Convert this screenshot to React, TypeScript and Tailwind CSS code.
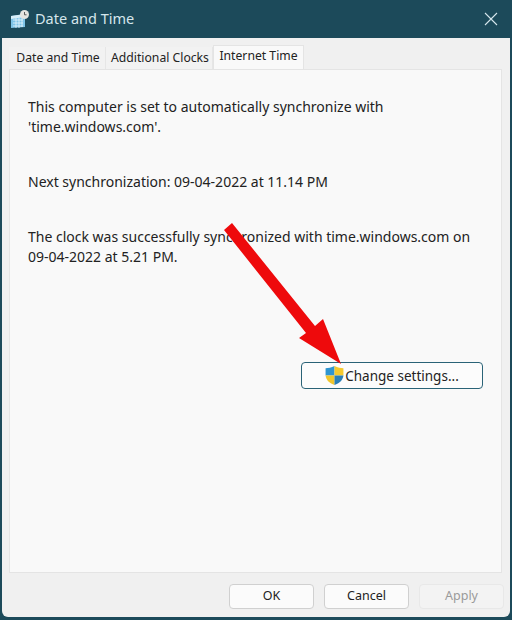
function WindowIcon() {
  return (
    <svg width="20" height="20" viewBox="0 0 20 20" className="shrink-0">
      <path d="M1 7 L15 5 L15 18 L1 19 Z" fill="#7fc4e8" />
      <path d="M1 7 L15 5 L15 8 L1 10 Z" fill="#d8eef8" />
      <path d="M3 11h10M3 14h10M3 17h10M6 9v10M9 9v10M12 9v9" stroke="#e8f6fc" strokeWidth="0.8" />
      <circle cx="14.5" cy="5.5" r="4.5" fill="#e4e4e0" />
      <path d="M14.5 3v2.8h2" stroke="#5a5a5a" strokeWidth="1" fill="none" />
    </svg>
  );
}

function ShieldIcon() {
  return (
    <svg width="21" height="21" viewBox="0 0 19 20" className="-ml-[1px] shrink-0">
      <path d="M9.5 1 C6.5 2.5 3.5 3 1 3 L1 10 L9.5 10 Z" fill="#2f95d0" />
      <path d="M9.5 1 C12.5 2.5 15.5 3 18 3 L18 10 L9.5 10 Z" fill="#f5c92e" />
      <path d="M1 10 C1.5 14.5 5 17.5 9.5 19 L9.5 10 Z" fill="#f0c62c" />
      <path d="M18 10 C17.5 14.5 14 17.5 9.5 19 L9.5 10 Z" fill="#2a7fb8" />
    </svg>
  );
}

function FooterButton({ label, disabled }: { label: string; disabled?: boolean }) {
  return (
    <button
      type="button"
      className={
        disabled
          ? 'h-[25px] w-[85px] rounded-[4px] border border-[#e8e8e8] bg-[#f3f3f3] text-[#9a9a9a]'
          : 'h-[25px] w-[85px] rounded-[4px] border border-[#d0d0d0] bg-[#fbfbfb] text-[#222222]'
      }
    >
      {label}
    </button>
  );
}

export default function App() {
  return (
    <div className="relative h-[620px] w-[512px] overflow-hidden bg-[#1c4a5a] font-['Noto_Sans',sans-serif] text-[12.5px]">
      <div className="flex h-[38px] items-center pl-[10px] pr-[14px] text-[#d5e6ec]">
        <WindowIcon />
        <span className="ml-[5px] text-[14.5px]">Date and Time</span>
        <svg width="14" height="14" viewBox="0 0 14 14" className="ml-auto">
          <path d="M1 1l12 12M13 1L1 13" stroke="#d5e6ec" strokeWidth="1.1" />
        </svg>
      </div>

      <div className="ml-[2px] mr-[2px] flex h-[579px] flex-col rounded-b-[6px] bg-[#f0f0f0] pl-[7px] pr-[6px]">
        <div className="flex h-[31px] items-end text-[12.2px] text-[#222222]">
          <div className="flex h-[22px] w-[97px] items-center justify-center border-r border-[#e6e6e6] bg-[#f2f2f2] pl-[2px]">Date and Time</div>
          <div className="flex h-[22px] w-[107px] items-center justify-center border-r border-[#e6e6e6] bg-[#f2f2f2] pl-[2px]">Additional Clocks</div>
          <div className="flex h-[24px] w-[91px] items-center justify-center border border-b-0 border-[#e4e4e4] bg-[#f9f9f9] pb-[3px]">Internet Time</div>
        </div>

        <div className="mr-[2px] flex h-[504px] flex-col border border-[#e4e4e4] bg-[#f9f9f9] pl-[18px] pr-[18px] pt-[27px] text-[14px] leading-[20px] text-[#222222]">
          <p className="whitespace-nowrap">
            This computer is set to automatically synchronize with
            <br />
            'time.windows.com'.
          </p>
          <p className="mt-[35px] whitespace-nowrap">Next synchronization: 09-04-2022 at 11.14 PM</p>
          <p className="mt-[35px] whitespace-nowrap">
            The clock was successfully synchronized with time.windows.com on
            <br />
            09-04-2022 at 5.21 PM.
          </p>
          <div className="mt-[95px] flex justify-end">
            <button
              type="button"
              className="flex h-[27px] w-[182px] items-center justify-center rounded-[4px] border border-[#2a6377] bg-[#fcfcfc] text-[13.5px] text-[#222222]"
            >
              <ShieldIcon />
              <span>Change settings...</span>
            </button>
          </div>
        </div>

        <div className="mt-[11px] flex justify-end gap-[10px]">
          <FooterButton label="OK" />
          <FooterButton label="Cancel" />
          <FooterButton label="Apply" disabled />
        </div>
      </div>

      <svg width="512" height="620" viewBox="0 0 512 620" className="pointer-events-none absolute inset-0">
        <path d="M232 223 L224 230 L306 333 L299 338 L341 364 L323 319 L315 326 Z" fill="#ee0a0c" />
      </svg>
    </div>
  );
}
